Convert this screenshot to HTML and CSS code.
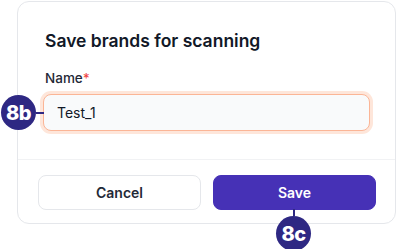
FILE: index.html
```html
<!DOCTYPE html>
<html lang="en">
<head>
  <meta charset="UTF-8">
  <meta name="viewport" content="width=device-width, initial-scale=1.0">
  <title>Save brands for scanning</title>
  <link rel="stylesheet" href="styles.css">
</head>
<body>
  <div class="page">
    <div class="modal">
      <div class="modal-body">
        <h2 class="modal-title">Save brands for scanning</h2>
        <label class="field-label" for="name">Name<span class="required">*</span></label>
        <input class="field-input" id="name" type="text" value="Test_1">
      </div>
      <div class="modal-footer">
        <button class="btn btn-cancel">Cancel</button>
        <button class="btn btn-save">Save</button>
      </div>
    </div>

    <!-- callout markers -->
    <div class="marker marker-8b">
      <span class="marker-dot">8b</span>
      <span class="marker-line"></span>
    </div>
    <div class="marker marker-8c">
      <span class="marker-line"></span>
      <span class="marker-dot">8c</span>
    </div>
  </div>
</body>
</html>
```

FILE: styles.css
```css
body {
  margin: 0;
  background-color: #fff;
  font-family: Inter, "Noto Sans", sans-serif;
  color: #111827;
}

.page {
  position: relative;
  width: 397px;
  height: 249px;
  overflow: hidden;
}

.modal {
  margin: 1px 0 0 17px;
  width: 379px;
  border: 1px solid #e5e7eb;
  border-radius: 12px;
  background-color: #fff;
  box-sizing: border-box;
}

.modal-body {
  padding: 27px 25px 28px 25px;
  border-bottom: 1px solid #f1f2f4;
}

.modal-title {
  margin: 0 0 16px 2px;
  font-size: 17.5px;
  line-height: 24px;
  font-weight: 600;
  color: #111827;
}

.field-label {
  display: block;
  margin: 0 0 7px 2px;
  font-size: 13.5px;
  line-height: 18px;
  font-weight: 500;
  color: #1f2937;
}

.required {
  color: #ef4444;
}

.field-input {
  display: block;
  width: 100%;
  height: 37px;
  box-sizing: border-box;
  padding: 0 13px;
  border: 1px solid #fbb596;
  border-radius: 8px;
  background-color: #f9fafb;
  box-shadow: 0 0 0 3px #fee6da;
  font-family: inherit;
  font-size: 14px;
  color: #111827;
  outline: none;
}

.modal-footer {
  display: flex;
  gap: 12px;
  padding: 15px 19px 13px 20px;
}

.btn {
  flex: 1;
  height: 35px;
  border-radius: 8px;
  font-family: inherit;
  font-size: 14px;
  font-weight: 600;
  cursor: pointer;
}

.btn-cancel {
  background-color: #fff;
  border: 1px solid #e5e7eb;
  color: #1f2937;
}

.btn-save {
  background-color: #4631b6;
  border: 1px solid #4631b6;
  color: #fff;
}

/* annotation markers */
.marker {
  position: absolute;
  display: flex;
  align-items: center;
}

.marker-dot {
  width: 35px;
  height: 35px;
  border-radius: 50%;
  background-color: #2e2883;
  color: #fff;
  font-size: 20px;
  font-weight: 800;
  display: flex;
  align-items: center;
  justify-content: center;
  letter-spacing: -0.5px;
}

.marker-line {
  background-color: #2e2883;
}

.marker-8b {
  left: 1px;
  top: 95px;
}

.marker-8b .marker-line {
  width: 8px;
  height: 2px;
}

.marker-8c {
  left: 276px;
  top: 209px;
  flex-direction: column;
}

.marker-8c .marker-line {
  width: 2px;
  height: 7px;
}
```
